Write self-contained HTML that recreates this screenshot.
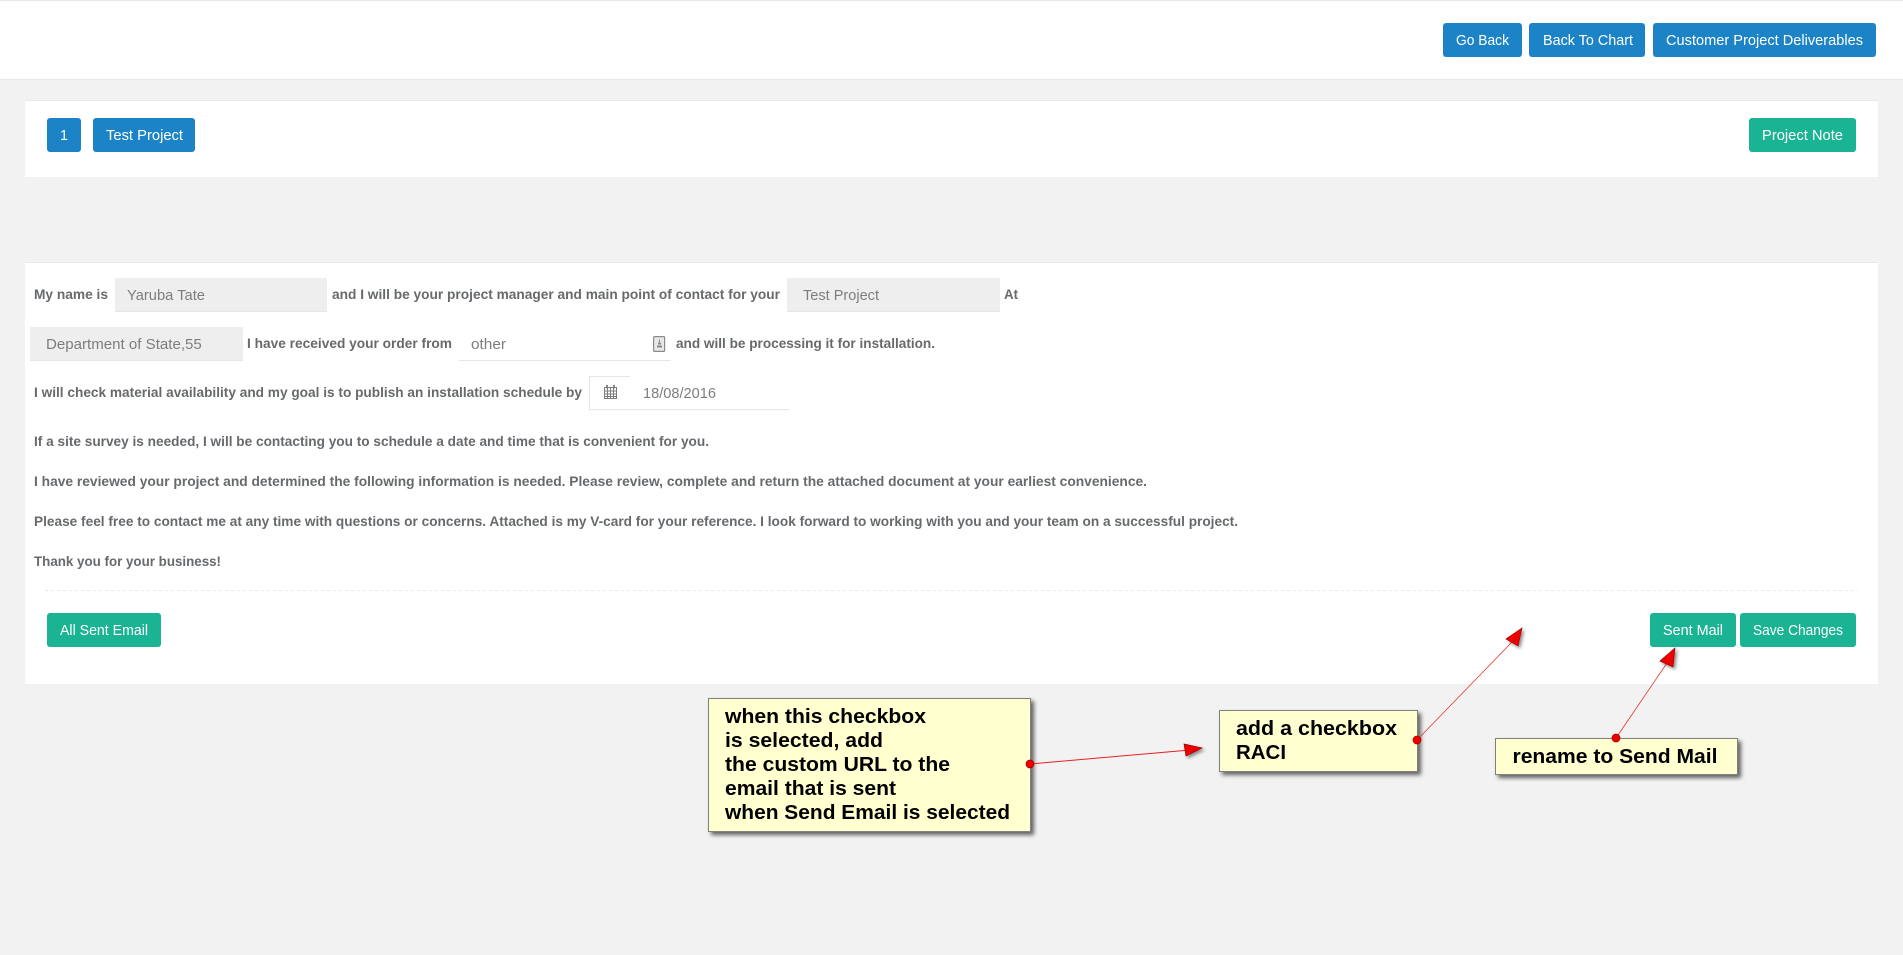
<!DOCTYPE html>
<html lang="en">
<head>
<meta charset="utf-8">
<title>Project</title>
<style>
html,body{margin:0;padding:0;background:#f2f2f2;width:1903px;height:955px;overflow:hidden}
svg{display:block;position:absolute;left:0;top:0}
text{font-family:"Liberation Sans",Arial,sans-serif}
.b{font-size:13.6px;font-weight:700;fill:#676a6c}
.i{font-size:14.5px;fill:#7b7e80}
.w{font-size:14.5px;fill:#fff}
.n{font-size:20.5px;font-weight:700;fill:#000}
</style>
</head>
<body>
<svg width="1903" height="955" viewBox="0 0 1903 955" xmlns="http://www.w3.org/2000/svg">
<defs>
<filter id="s" x="-10%" y="-20%" width="120%" height="140%"><feDropShadow dx="3" dy="3" stdDeviation="2.200" flood-color="#000" flood-opacity=".6"/></filter>
<filter id="t" x="-40%" y="-40%" width="180%" height="180%"><feDropShadow dx="2" dy="2" stdDeviation="1.500" flood-color="#000" flood-opacity=".45"/></filter>
<clipPath id="c"><rect x="46" y="327" width="155" height="34"/></clipPath>
</defs>
<rect width="1903" height="955" fill="#f2f2f2"/>

<!-- top bar -->
<rect width="1903" height="79" fill="#fff"/>
<rect width="1903" height="1" fill="#e7eaec"/>
<rect y="79" width="1903" height="1" fill="#e7eaec"/>
<rect x="1443" y="23" width="79" height="34" rx="3" fill="#1c84c6"/>
<text class="w" x="1456" y="45" textLength="53" lengthAdjust="spacingAndGlyphs">Go Back</text>
<rect x="1529" y="23" width="116" height="34" rx="3" fill="#1c84c6"/>
<text class="w" x="1543" y="45" textLength="90" lengthAdjust="spacingAndGlyphs">Back To Chart</text>
<rect x="1653" y="23" width="223" height="34" rx="3" fill="#1c84c6"/>
<text class="w" x="1666" y="45" textLength="197" lengthAdjust="spacingAndGlyphs">Customer Project Deliverables</text>

<!-- project card -->
<rect x="25" y="100" width="1853" height="77" fill="#fff"/>
<rect x="25" y="100" width="1853" height="1" fill="#e7eaec"/>
<rect x="47" y="118" width="34" height="34" rx="3" fill="#1c84c6"/>
<text class="w" x="60" y="140" textLength="8" lengthAdjust="spacingAndGlyphs">1</text>
<rect x="93" y="118" width="102" height="34" rx="3" fill="#1c84c6"/>
<text class="w" x="106" y="140" textLength="77" lengthAdjust="spacingAndGlyphs">Test Project</text>
<rect x="1749" y="118" width="107" height="34" rx="3" fill="#1ab394"/>
<text class="w" x="1762" y="140" textLength="81" lengthAdjust="spacingAndGlyphs">Project Note</text>

<!-- form card -->
<rect x="25" y="262" width="1853" height="422" fill="#fff"/>
<rect x="25" y="262" width="1853" height="1" fill="#e7eaec"/>

<text class="b" x="34" y="299" textLength="74" lengthAdjust="spacingAndGlyphs">My name is</text>
<rect x="115" y="278" width="212" height="34" fill="#eee"/>
<rect x="115" y="311" width="212" height="1" fill="#e5e6e7"/>
<text class="i" x="127" y="300" textLength="78" lengthAdjust="spacingAndGlyphs">Yaruba Tate</text>
<text class="b" x="332" y="299" textLength="448" lengthAdjust="spacingAndGlyphs">and I will be your project manager and main point of contact for your</text>
<rect x="787" y="278" width="213" height="34" fill="#eee"/>
<rect x="787" y="311" width="213" height="1" fill="#e5e6e7"/>
<text class="i" x="803" y="300" textLength="76" lengthAdjust="spacingAndGlyphs">Test Project</text>
<text class="b" x="1004" y="299" textLength="14" lengthAdjust="spacingAndGlyphs">At</text>

<rect x="30" y="327" width="213" height="34" fill="#eee"/>
<rect x="30" y="360" width="213" height="1" fill="#e5e6e7"/>
<g clip-path="url(#c)"><text class="i" x="46" y="349" textLength="160" lengthAdjust="spacingAndGlyphs">Department of State,55:</text></g>
<text class="b" x="247" y="348" textLength="205" lengthAdjust="spacingAndGlyphs">I have received your order from</text>
<rect x="459" y="360" width="212" height="1" fill="#e5e6e7"/>
<text class="i" x="471" y="349" textLength="35" lengthAdjust="spacingAndGlyphs">other</text>
<rect x="653.600" y="336.600" width="11" height="14.800" rx="1" stroke-width="1.200" fill="#e8e8e8" stroke="#8a8c8e"/>
<path d="M657 347.500h5v-2h-5zM658 344.500h3v-2h-3zM659 342h1v-2.500h-1z" fill="#85878a"/>
<text class="b" x="676" y="348" textLength="259" lengthAdjust="spacingAndGlyphs">and will be processing it for installation.</text>

<text class="b" x="34" y="397" textLength="548" lengthAdjust="spacingAndGlyphs">I will check material availability and my goal is to publish an installation schedule by</text>
<rect x="589" y="376" width="41" height="1" fill="#e5e6e7"/>
<rect x="589" y="376" width="1" height="34" fill="#e5e6e7"/>
<rect x="589" y="409" width="200" height="1" fill="#e5e6e7"/>
<g fill="none" stroke="#7b7e80" stroke-width="1">
<rect x="604.500" y="387.500" width="12" height="11"/>
<path d="M604.500 391h12M604.500 394h12M604.500 396.500h12M607.500 388v10.500M610.500 388v10.500M613.500 388v10.500"/>
<path d="M607 385v3.500M614 385v3.500" stroke-width="1.800"/>
</g>
<text class="i" x="643" y="398" textLength="73" lengthAdjust="spacingAndGlyphs">18/08/2016</text>

<text class="b" x="34" y="446" textLength="675" lengthAdjust="spacingAndGlyphs">If a site survey is needed, I will be contacting you to schedule a date and time that is convenient for you.</text>
<text class="b" x="34" y="486" textLength="1113" lengthAdjust="spacingAndGlyphs">I have reviewed your project and determined the following information is needed. Please review, complete and return the attached document at your earliest convenience.</text>
<text class="b" x="34" y="526" textLength="1204" lengthAdjust="spacingAndGlyphs">Please feel free to contact me at any time with questions or concerns. Attached is my V-card for your reference. I look forward to working with you and your team on a successful project.</text>
<text class="b" x="34" y="566" textLength="187" lengthAdjust="spacingAndGlyphs">Thank you for your business!</text>

<line x1="45" y1="590.500" x2="1858" y2="590.500" stroke="#e7eaec" stroke-width="1" stroke-dasharray="3 3"/>

<rect x="47" y="613" width="114" height="34" rx="3" fill="#1ab394"/>
<text class="w" x="60" y="635" textLength="88" lengthAdjust="spacingAndGlyphs">All Sent Email</text>
<rect x="1650" y="613" width="86" height="34" rx="3" fill="#1ab394"/>
<text class="w" x="1663" y="635" textLength="60" lengthAdjust="spacingAndGlyphs">Sent Mail</text>
<rect x="1740" y="613" width="116" height="34" rx="3" fill="#1ab394"/>
<text class="w" x="1753" y="635" textLength="90" lengthAdjust="spacingAndGlyphs">Save Changes</text>

<!-- annotation boxes -->
<rect x="708.500" y="698.500" width="322" height="133" fill="#ffffcf" stroke="#808080" filter="url(#s)"/>
<text class="n" x="725" y="723" textLength="201" lengthAdjust="spacingAndGlyphs">when this checkbox</text>
<text class="n" x="725" y="747" textLength="158" lengthAdjust="spacingAndGlyphs">is selected, add</text>
<text class="n" x="725" y="771" textLength="225" lengthAdjust="spacingAndGlyphs">the custom URL to the</text>
<text class="n" x="725" y="795" textLength="171" lengthAdjust="spacingAndGlyphs">email that is sent</text>
<text class="n" x="725" y="819" textLength="285" lengthAdjust="spacingAndGlyphs">when Send Email is selected</text>

<rect x="1219.500" y="710.500" width="198" height="61" fill="#ffffcf" stroke="#808080" filter="url(#s)"/>
<text class="n" x="1236" y="735" textLength="161" lengthAdjust="spacingAndGlyphs">add a checkbox</text>
<text class="n" x="1236" y="759" textLength="50" lengthAdjust="spacingAndGlyphs">RACI</text>

<rect x="1495.500" y="738.500" width="242" height="36" fill="#ffffcf" stroke="#808080" filter="url(#s)"/>
<text class="n" x="1512.500" y="763" textLength="205" lengthAdjust="spacingAndGlyphs">rename to Send Mail</text>

<!-- arrows -->
<g fill="#ee0000">
<line x1="1030" y1="764" x2="1190" y2="750" stroke="#e82020" stroke-width="1"/>
<path d="M1202 748L1184 744L1186 756Z" filter="url(#t)" stroke="#a00000" stroke-width=".7"/>
<circle cx="1030" cy="764" r="4" stroke="#a00000" stroke-width=".7"/>

<line x1="1417" y1="740" x2="1513" y2="641" stroke="#e83030" stroke-width=".8"/>
<path d="M1522 628L1506 639L1518 646Z" filter="url(#t)" stroke="#a00000" stroke-width=".7"/>
<circle cx="1417" cy="740" r="4" stroke="#a00000" stroke-width=".7"/>

<line x1="1616" y1="738" x2="1667" y2="663" stroke="#e83030" stroke-width=".8"/>
<path d="M1675 648L1660 661L1673 667Z" filter="url(#t)" stroke="#a00000" stroke-width=".7"/>
<circle cx="1616" cy="738" r="4" stroke="#a00000" stroke-width=".7"/>
</g>
</svg>
</body>
</html>
